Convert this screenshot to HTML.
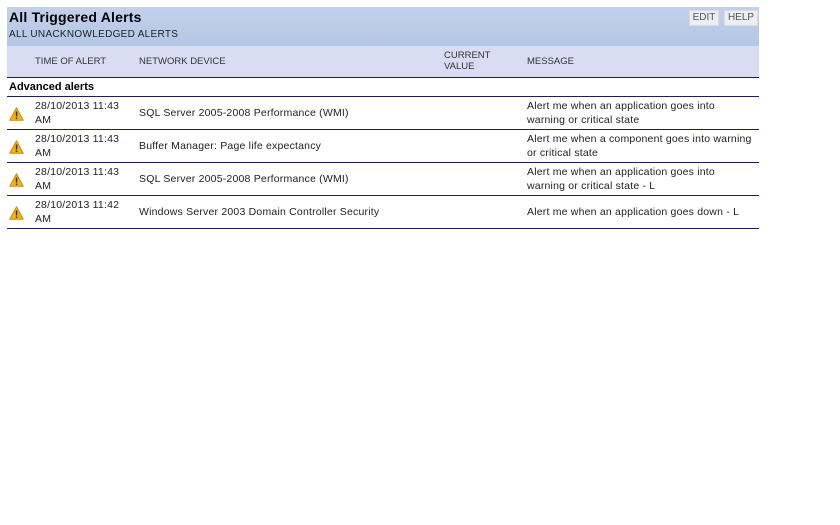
<!DOCTYPE html>
<html><head><meta charset="utf-8"><style>
body{margin:0;background:#fff;font-family:"Liberation Sans",Arial,sans-serif;width:840px;height:525px;position:relative;overflow:hidden}
.hd{position:absolute;left:7px;top:7px;width:752px;height:39px;background:linear-gradient(#c3d1eb,#b4c6e4)}
.t{position:absolute;left:2px;top:2px;font-size:14px;font-weight:bold;color:#000;letter-spacing:0.2px}
.st{position:absolute;left:2px;top:22px;font-size:10px;color:#222;letter-spacing:0.3px}
.btn{position:absolute;top:3px;height:14px;background:#eceef2;border:1px solid #d8dce6;font-size:10px;color:#555;line-height:14px;text-align:center}
.ch{position:absolute;left:7px;top:46px;width:752px;height:31px;background:#d9ddf3;border-bottom:1px solid #1b1f5a}
.ch span,.r span{position:absolute;font-size:9.5px;color:#333}
.sec{position:absolute;left:9px;top:81px;font-size:11px;font-weight:bold;color:#000}
.r{position:absolute;left:7px;width:752px;height:32px;border-top:1px solid #1b1f5a}
.r span{font-size:10.5px;color:#222;line-height:14px;letter-spacing:0.2px}
.last{position:absolute;left:7px;top:228px;width:752px;border-top:1px solid #1b1f5a}
svg{position:absolute;left:2px;top:10px}
</style></head><body>
<div class="hd"><div class="t">All Triggered Alerts</div><div class="st">ALL UNACKNOWLEDGED ALERTS</div>
<div class="btn" style="left:682px;width:28px">EDIT</div><div class="btn" style="left:717px;width:32px">HELP</div></div>
<div class="ch"><span style="left:28px;top:10px">TIME OF ALERT</span><span style="left:132px;top:10px">NETWORK DEVICE</span><span style="left:437px;top:4px;line-height:11px">CURRENT<br>VALUE</span><span style="left:520px;top:10px">MESSAGE</span></div>
<div class="sec">Advanced alerts</div>
<div class="r" style="top:96px"><svg width="15" height="14"><path d="M7.5 0.8L14.2 13.2H0.8Z" fill="#f2b21c" stroke="#c98a0a" stroke-linejoin="round"/><rect x="6.8" y="4.5" width="1.5" height="5" fill="#333"/><rect x="6.8" y="10.5" width="1.5" height="1.5" fill="#333"/></svg><span style="left:28px;top:2px">28/10/2013 11:43<br>AM</span><span style="left:132px;top:9px">SQL Server 2005-2008 Performance (WMI)</span><span style="left:520px;top:2px">Alert me when an application goes into<br>warning or critical state</span></div>
<div class="r" style="top:129px"><svg width="15" height="14"><path d="M7.5 0.8L14.2 13.2H0.8Z" fill="#f2b21c" stroke="#c98a0a" stroke-linejoin="round"/><rect x="6.8" y="4.5" width="1.5" height="5" fill="#333"/><rect x="6.8" y="10.5" width="1.5" height="1.5" fill="#333"/></svg><span style="left:28px;top:2px">28/10/2013 11:43<br>AM</span><span style="left:132px;top:9px">Buffer Manager: Page life expectancy</span><span style="left:520px;top:2px">Alert me when a component goes into warning<br>or critical state</span></div>
<div class="r" style="top:162px"><svg width="15" height="14"><path d="M7.5 0.8L14.2 13.2H0.8Z" fill="#f2b21c" stroke="#c98a0a" stroke-linejoin="round"/><rect x="6.8" y="4.5" width="1.5" height="5" fill="#333"/><rect x="6.8" y="10.5" width="1.5" height="1.5" fill="#333"/></svg><span style="left:28px;top:2px">28/10/2013 11:43<br>AM</span><span style="left:132px;top:9px">SQL Server 2005-2008 Performance (WMI)</span><span style="left:520px;top:2px">Alert me when an application goes into<br>warning or critical state - L</span></div>
<div class="r" style="top:195px"><svg width="15" height="14"><path d="M7.5 0.8L14.2 13.2H0.8Z" fill="#f2b21c" stroke="#c98a0a" stroke-linejoin="round"/><rect x="6.8" y="4.5" width="1.5" height="5" fill="#333"/><rect x="6.8" y="10.5" width="1.5" height="1.5" fill="#333"/></svg><span style="left:28px;top:2px">28/10/2013 11:42<br>AM</span><span style="left:132px;top:9px">Windows Server 2003 Domain Controller Security</span><span style="left:520px;top:9px">Alert me when an application goes down - L</span></div>
<div class="last"></div>
</body></html>
